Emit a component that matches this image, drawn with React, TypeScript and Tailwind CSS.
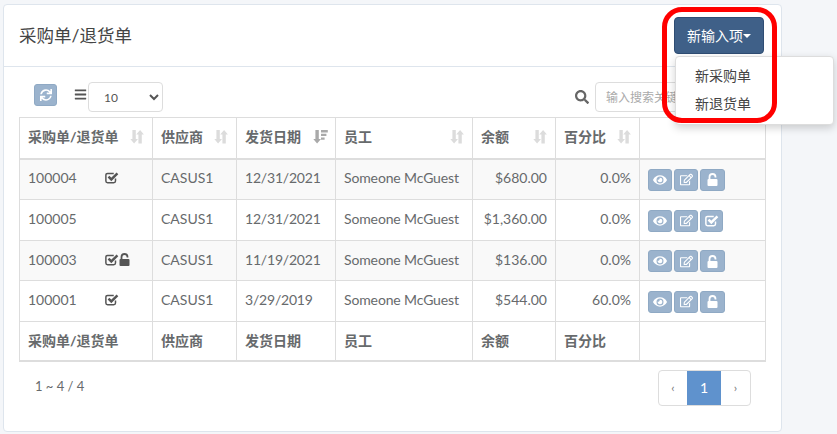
import { FaBars, FaEye, FaRegEdit, FaSearch, FaSync } from 'react-icons/fa';

const cols = ['采购单/退货单', '供应商', '发货日期', '员工', '余额', '百分比'];

const rows = [
  { id: '100004', flags: 'check', date: '12/31/2021', total: '$680.00', pct: '0.0%', last: 'lock', h: 'h-[41px]', pb: 'pb-[4px]' },
  { id: '100005', flags: '', date: '12/31/2021', total: '$1,360.00', pct: '0.0%', last: 'check', h: 'h-[41px]', pb: 'pb-[4px]' },
  { id: '100003', flags: 'both', date: '11/19/2021', total: '$136.00', pct: '0.0%', last: 'lock', h: 'h-[40px]', pb: 'pb-[2px]' },
  { id: '100001', flags: 'check', date: '3/29/2019', total: '$544.00', pct: '60.0%', last: 'lock', h: 'h-[41px]', pb: 'pb-[4px]' },
];

const SortIcon = ({ active }: { active?: boolean }) => (
  <svg width="15" height="15" viewBox="0 0 15 15" className={active ? 'fill-[#a9a9a9]' : 'fill-[#dcdcdc]'}>
    <path d="M2.400 1h3.400v9H8l-3.900 4.500L.3 10h2.100z" />
    {active ? (
      <path d="M8 1h6.800v2.400H8zM8 4.700h5.400v2.400H8zM8 8.400h3.600v2.400H8z" />
    ) : (
      <path d="M11.800 14.500H8.400v-9H6.200L10.100 1l3.800 4.500h-2.100z" />
    )}
  </svg>
);

const CheckIcon = ({ className }: { className?: string }) => (
  <svg width="14" height="13" viewBox="0 0 16 14" fill="none" stroke="currentColor" className={className}>
    <path d="M12 8v3a2 2 0 0 1-2 2H3a2 2 0 0 1-2-2V4.500a2 2 0 0 1 2-2h7" strokeWidth="1.700" />
    <path d="M4 6 7.200 9.200 14.200 2.200" strokeWidth="2.800" />
  </svg>
);

const UnlockIcon = ({ className }: { className?: string }) => (
  <svg width="11" height="13" viewBox="0 0 11 13" className={className}>
    <rect x="0.500" y="6" width="10" height="7" rx="1" fill="currentColor" />
    <path d="M2.500 6.500V4a3 3 0 0 1 6 0v.6" fill="none" stroke="currentColor" strokeWidth="1.800" />
  </svg>
);

const ActionButton = ({ children, w }: { children: React.ReactNode; w: string }) => (
  <span className={`flex h-[22px] items-center justify-center rounded-[3px] border border-[#8fa9c4] bg-[#9bb3cd] text-[13px] text-white ${w}`}>
    {children}
  </span>
);

const App = () => {
  return (
    <div className="relative h-[434px] w-[837px] overflow-hidden bg-[#f4f6f9] font-['Lato','Noto_Sans_CJK_SC',sans-serif] text-[14px] text-[#676a6c]">
      <div className="ml-[3px] mt-[4px] h-[428px] w-[779px] rounded-[4px] border border-[#dee5ed] bg-white">
        <div className="flex h-[62px] items-center border-b border-[#dee5ed] pl-[15px]">
          <h1 className="text-[17.500px] leading-none text-[#444]">采购单/退货单</h1>
        </div>

        <div className="flex h-[50px] items-start justify-between pl-[30px] pr-[15px] pt-[15px]">
          <div className="flex items-start">
            <span className="mt-[2px] flex h-[22px] w-[23px] items-center justify-center rounded-[3px] border border-[#8fa9c4] bg-[#9bb3cd] text-[12px] text-white">
              <FaSync />
            </span>
            <FaBars className="ml-[17px] mt-[6px] text-[13px] text-[#555]" />
            <select className="ml-[1px] h-[30px] w-[75px] rounded-[4px] border border-[#ddd] bg-white pl-[11px] text-[12px] text-[#555]">
              <option>10</option>
            </select>
          </div>
          <div className="flex items-start">
            <FaSearch className="mr-[6px] mt-[8px] text-[14px] text-[#666]" />
            <input
              className="h-[30px] w-[171px] rounded-[4px] border border-[#ddd] px-[10px] text-[12px] placeholder:text-[#aaa]"
              placeholder="输入搜索关键词"
            />
          </div>
        </div>

        <table className="ml-[15px] w-[747px] table-fixed border-collapse border-b-[2px] border-b-[#ddd]">
          <colgroup>
            <col className="w-[133px]" />
            <col className="w-[84px]" />
            <col className="w-[99px]" />
            <col className="w-[137px]" />
            <col className="w-[83px]" />
            <col className="w-[84px]" />
            <col />
          </colgroup>
          <thead>
            <tr className="h-[41px] border-b-[2px] border-b-[#ddd]">
              {cols.map((c, i) => (
                <th key={c} className="border border-[#ddd] pb-[3px] pl-[8px] pr-[7px] text-left font-bold">
                  <div className="flex items-center justify-between">
                    <span>{c}</span>
                    <SortIcon active={i === 2} />
                  </div>
                </th>
              ))}
              <th className="border border-[#ddd]" />
            </tr>
          </thead>
          <tbody>
            {rows.map((r, i) => (
              <tr key={r.id} className={`${r.h} ${i % 2 === 0 ? 'bg-[#f9f9f9]' : ''}`}>
                <td className={`border border-[#ddd] pl-[8px] ${r.pb}`}>
                  <div className="flex items-center">
                    <span className="w-[77px]">{r.id}</span>
                    {r.flags && <CheckIcon className="text-[#555]" />}
                    {r.flags === 'both' && <UnlockIcon className="text-[#555]" />}
                  </div>
                </td>
                <td className={`border border-[#ddd] pl-[8px] ${r.pb}`}>CASUS1</td>
                <td className={`border border-[#ddd] pl-[8px] tracking-[-0.2px] ${r.pb}`}>{r.date}</td>
                <td className={`border border-[#ddd] pl-[8px] tracking-[-0.13px] ${r.pb}`}>Someone McGuest</td>
                <td className={`border border-[#ddd] pr-[8px] text-right ${r.pb}`}>{r.total}</td>
                <td className={`border border-[#ddd] pr-[8px] text-right ${r.pb}`}>{r.pct}</td>
                <td className="border border-[#ddd] pl-[8px] pt-[1px]">
                  <div className="flex gap-[2px]">
                    <ActionButton w="w-[24px]"><FaEye className="text-[14px]" /></ActionButton>
                    <ActionButton w="w-[24px]"><FaRegEdit /></ActionButton>
                    {r.last === 'lock' ? (
                      <ActionButton w="w-[25px]"><UnlockIcon /></ActionButton>
                    ) : (
                      <ActionButton w="w-[23px]"><CheckIcon /></ActionButton>
                    )}
                  </div>
                </td>
              </tr>
            ))}
          </tbody>
          <tfoot>
            <tr className="h-[39px]">
              {cols.map((c) => (
                <th key={c} className="border border-[#ddd] pl-[8px] text-left font-bold">{c}</th>
              ))}
              <th className="border border-[#ddd]" />
            </tr>
          </tfoot>
        </table>

        <div className="ml-[15px] mt-[8px] flex w-[747px] items-start justify-between pr-[15px]">
          <span className="pl-[16px] pt-[7px] text-[13px]">1 ~ 4 / 4</span>
          <div className="flex h-[36px] items-stretch overflow-hidden rounded-[4px] border border-[#ddd] text-[12px]">
            <span className="flex w-[28px] items-center justify-center text-[#777]">‹</span>
            <span className="flex w-[34px] items-center justify-center bg-[#5f92cd] text-[14px] text-white">1</span>
            <span className="flex w-[29px] items-center justify-center text-[#777]">›</span>
          </div>
        </div>
      </div>

      <button className="absolute left-[674px] top-[17px] flex h-[37px] w-[90px] items-center justify-center rounded-[4px] border border-[#2f4d73] bg-[#3f6088] text-[14px] text-white">
        新输入项
        <span className="mt-[1px] h-0 w-0 border-x-[4.500px] border-t-[4.500px] border-x-transparent border-t-white" />
      </button>

      <div className="absolute left-[675px] top-[56px] flex h-[69px] w-[159px] flex-col rounded-[4px] border border-[#ddd] bg-white pl-[19px] pt-[5px] text-[14px] leading-[28px] text-[#444] shadow-[0_3px_8px_rgba(0,0,0,0.18)]">
        <span>新采购单</span>
        <span>新退货单</span>
      </div>

      <div className="pointer-events-none absolute left-[662px] top-[7px] h-[116px] w-[115px] rounded-[20px] border-[5px] border-[#f00]" />
    </div>
  );
};

export default App;
